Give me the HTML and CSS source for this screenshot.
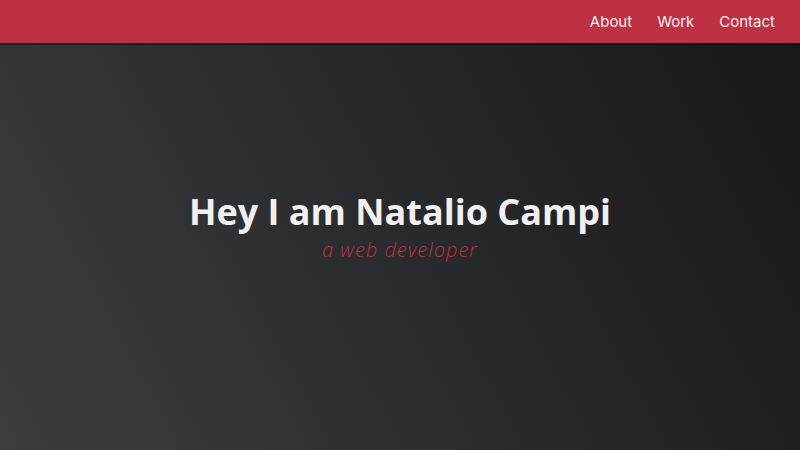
FILE: index.html
```html
<!DOCTYPE html>
<html lang="en">
<head>
<meta charset="utf-8">
<title>Natalio Campi</title>
<link rel="stylesheet" href="styles.css">
</head>
<body>
<header class="navbar">
  <nav class="nav-list">
    <a class="nav-link" href="#about">About</a>
    <a class="nav-link" href="#work">Work</a>
    <a class="nav-link" href="#contact">Contact</a>
  </nav>
</header>
<section class="welcome">
  <h1 class="title">Hey I am Natalio Campi</h1>
  <p class="subtitle">a web developer</p>
</section>
</body>
</html>
```
FILE: styles.css
```css
html, body {
  margin: 0;
  padding: 0;
  height: 100%;
}
body {
  font-family: "Open Sans", "Liberation Sans", sans-serif;
  background: linear-gradient(62deg, #3a3d40 0%, #181719 100%);
  color: #f0f0f0;
  display: flex;
  flex-direction: column;
  overflow: hidden;
}
.navbar {
  height: 43px;
  background: #be3144;
  box-shadow: 0 2px 0 rgba(0, 0, 0, 0.4);
  display: flex;
  justify-content: flex-end;
  align-items: center;
  flex-shrink: 0;
}
.nav-list {
  display: flex;
  gap: 25px;
  padding-right: 25px;
}
.nav-link {
  font-family: "Inter", "Open Sans", sans-serif;
  font-size: 15px;
  color: #f0f0f0;
  text-decoration: none;
}
.welcome {
  flex: 1;
  display: flex;
  flex-direction: column;
  align-items: center;
  justify-content: center;
  padding-bottom: 38px;
}
.title {
  margin: 0;
  font-family: "Open Sans", sans-serif;
  font-size: 36px;
  font-weight: 700;
  line-height: 1.1;
}
.subtitle {
  margin: 4px 0 0;
  font-family: "Open Sans", sans-serif;
  font-size: 20px;
  font-weight: 300;
  font-style: italic;
  letter-spacing: 1px;
  color: #be3144;
}
```
